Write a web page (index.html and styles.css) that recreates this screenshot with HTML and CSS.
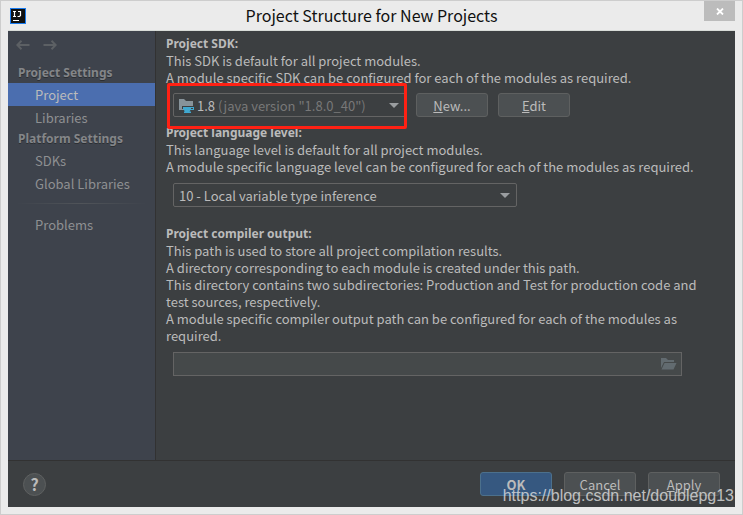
FILE: index.html
```html
<!DOCTYPE html>
<html lang="en">
<head>
    <meta charset="UTF-8">
    <meta name="viewport" content="width=device-width, initial-scale=1.0">
    <title>Project Structure for New Projects</title>
    <link rel="stylesheet" href="styles.css">
</head>
<body>
    <div class="window">
        <header class="titlebar">
            <svg class="logo" width="16" height="16" viewBox="0 0 16 16">
                <rect width="16" height="16" fill="#1a7cf0"/>
                <rect x="1" y="1" width="14" height="14" fill="#111"/>
                <path d="M3 3.500h3M4.500 3.500v5M3 8.500h3M8 3.500h2.500v4l-1 1H7.500" fill="none" stroke="#fff" stroke-width="1.200"/>
                <rect x="3" y="12" width="6" height="1" fill="#fff"/>
            </svg>
            <h1>Project Structure for New Projects</h1>
            <button class="close" aria-label="Close">
                <svg width="8" height="7" viewBox="0 0 8 7">
                    <path d="M1 0.500l6 6M7 0.500l-6 6" stroke="#fff" stroke-width="1.800"/>
                </svg>
            </button>
        </header>

        <div class="dialog">
            <div class="panes">
                <nav class="sidebar">
                    <div class="history">
                        <button aria-label="Back">
                            <svg width="14" height="10" viewBox="0 0 14 10"><path d="M13.500 5H1.500M5.500 0.800L1.300 5l4.200 4.200"/></svg>
                        </button>
                        <button aria-label="Forward">
                            <svg width="14" height="10" viewBox="0 0 14 10"><path d="M0.500 5h12M8.500 0.800L12.700 5 8.500 9.200"/></svg>
                        </button>
                    </div>
                    <h2>Project Settings</h2>
                    <a href="#project" class="active">Project</a>
                    <a href="#libraries">Libraries</a>
                    <h2>Platform Settings</h2>
                    <a href="#sdks">SDKs</a>
                    <a href="#global">Global Libraries</a>
                    <hr>
                    <a href="#problems">Problems</a>
                </nav>

                <main class="content">
                    <section class="sdk">
                        <label for="sdk">Project SDK:</label>
                        <p>This SDK is default for all project modules.</p>
                        <p>A module specific SDK can be configured for each of the modules as required.</p>
                        <div class="field">
                            <div class="combo sdk-combo">
                                <select id="sdk">
                                    <option>1.8</option>
                                </select>
                                <div class="sdk-info">
                                    <svg width="16" height="15" viewBox="0 0 16 15">
                                        <path d="M0 1h5l2 2h7v9H0z" fill="#87939a"/>
                                        <path d="M3 8h12v3H3z" fill="#3c3f41"/>
                                        <path d="M4 9h11v3h-3.500l-1 1.500H12V15H5v-1.500h1L4 11z" fill="#40a8d0"/>
                                        <rect x="12" y="10" width="2" height="1" fill="#3c3f41"/>
                                    </svg>
                                    <span>(java version "1.8.0_40")</span>
                                </div>
                                <div class="highlight"></div>
                            </div>
                            <button class="btn"><u>N</u>ew...</button>
                            <button class="btn"><u>E</u>dit</button>
                        </div>
                    </section>

                    <section class="level">
                        <label for="level">Project language level:</label>
                        <p>This language level is default for all project modules.</p>
                        <p>A module specific language level can be configured for each of the modules as required.</p>
                        <div class="field">
                            <div class="combo level-combo">
                                <select id="level">
                                    <option>10 - Local variable type inference</option>
                                </select>
                            </div>
                        </div>
                    </section>

                    <section>
                        <label for="output">Project compiler output:</label>
                        <p>This path is used to store all project compilation results.</p>
                        <p>A directory corresponding to each module is created under this path.</p>
                        <p>This directory contains two subdirectories: Production and Test for production code and test sources, respectively.</p>
                        <p>A module specific compiler output path can be configured for each of the modules as required.</p>
                        <div class="path">
                            <input type="text" id="output">
                            <button aria-label="Browse">
                                <svg width="16" height="12" viewBox="0 0 16 12">
                                    <path d="M0 0h5l2 2h6v2H3L0 10z" fill="#626b70"/>
                                    <path d="M3.500 5H15.500l-3 6.500H0.500z" fill="#626b70"/>
                                </svg>
                            </button>
                        </div>
                    </section>
                </main>
            </div>

            <footer class="footer">
                <button class="help" aria-label="Help">?</button>
                <button class="btn primary">OK</button>
                <button class="btn">Cancel</button>
                <button class="btn"><u>A</u>pply</button>
            </footer>
        </div>
        <div class="watermark">https://blog.csdn.net/doublepg13</div>
    </div>
</body>
</html>
```

FILE: styles.css
```css
* {
    box-sizing: border-box;
}
body {
    margin: 0;
    font-family: "Noto Sans CJK SC", "Noto Sans", sans-serif;
    font-size: 13px;
    line-height: 17px;
    color: #bbbbbb;
}
button, select, input {
    font: inherit;
    color: inherit;
    margin: 0;
    padding: 0;
}
.window {
    position: relative;
    display: flex;
    flex-direction: column;
    min-height: 100vh;
    padding: 0 7px 7px;
    background: #ebebeb;
    border: 1px solid #cdcdcd;
}
.titlebar {
    display: grid;
    grid-template-columns: 32px 1fr 32px;
    align-items: center;
    height: 29px;
}
.logo {
    margin-left: 2px;
}
.titlebar h1 {
    margin: 0;
    font-size: 16px;
    font-weight: normal;
    text-align: center;
    color: #111;
}
.close {
    align-self: start;
    justify-self: end;
    display: flex;
    align-items: center;
    justify-content: center;
    width: 31px;
    height: 20px;
    background: #bcbcbc;
    border: none;
}
.dialog {
    flex: 1;
    display: flex;
    flex-direction: column;
    background: #3c3f41;
    border-top: 1px solid #d8dcd8;
}
.panes {
    flex: 1;
    display: flex;
    border-bottom: 1px solid #323232;
}

/* sidebar */
.sidebar {
    width: 148px;
    flex-shrink: 0;
    background: #3e434c;
    border-right: 1px solid #323232;
}
.history {
    display: flex;
    gap: 13px;
    padding: 9px 8px 0;
    height: 32px;
}
.history button {
    height: 10px;
    display: flex;
    background: none;
    border: none;
}
.history path {
    fill: none;
    stroke: #5c6064;
    stroke-width: 2;
}
.sidebar h2 {
    margin: 0;
    padding-left: 10px;
    font-family: "Noto Sans", sans-serif;
    font-size: 12px;
    line-height: 20px;
    color: #848689;
    text-shadow: 0 1px #2c2f33;
}
.sidebar a {
    display: block;
    padding-left: 27px;
    line-height: 23px;
    color: #8e9092;
    text-decoration: none;
}
.sidebar a.active {
    background: #4b6eaf;
    color: #bbbbbb;
}
.sidebar hr {
    height: 1px;
    margin: 8px 8px 9px;
    border: none;
    background: linear-gradient(to right, #3e434c, #505459, #3e434c);
}

/* settings */
.content {
    flex: 1;
    padding: 4px 10px;
}
.content label {
    display: block;
    font-family: "Noto Sans", sans-serif;
    font-size: 12px;
    font-weight: bold;
}
.content p {
    max-width: 540px;
    margin: 0;
}
.sdk {
    margin-bottom: 7px;
}
.level {
    margin-bottom: 18px;
}
.field {
    display: flex;
    gap: 10px;
    margin: 7px 7px 0;
}
.level .field {
    margin-top: 8px;
}
.combo {
    position: relative;
    display: grid;
}
.combo::after {
    content: "";
    grid-area: 1 / 1;
    place-self: center end;
    margin-right: 7px;
    border: 5px solid transparent;
    border-top-color: #9a9da0;
    border-bottom: none;
    pointer-events: none;
}
.combo select {
    grid-area: 1 / 1;
    height: 24px;
    padding: 0 20px 0 5px;
    appearance: none;
    background: #3c3f41;
    border: 1px solid #646464;
    border-radius: 2px;
}
.sdk-combo {
    width: 233px;
}
.sdk-combo select {
    padding-left: 23px;
}
.sdk-info {
    grid-area: 1 / 1;
    display: flex;
    align-items: center;
    gap: 23px;
    padding-left: 6px;
    color: #787878;
    pointer-events: none;
}
.highlight {
    position: absolute;
    inset: -10px -1px -12px -6px;
    border: 3px solid #ff2114;
    border-radius: 2px;
    pointer-events: none;
}
.level-combo {
    width: 344px;
}
.btn {
    width: 72px;
    height: 24px;
    background: #4c5052;
    border: 1px solid #5e6060;
    border-radius: 3px;
}
.btn.primary {
    background: #365880;
    border-color: #4c708c;
    font-weight: bold;
}
.path {
    display: flex;
    align-items: center;
    max-width: 509px;
    height: 24px;
    margin: 8px 7px 0;
    padding-right: 4px;
    background: #45494a;
    border: 1px solid #646464;
}
.path input {
    flex: 1;
    padding: 0 5px;
    background: none;
    border: none;
}
.path button {
    display: flex;
    background: none;
    border: none;
}

/* bottom buttons */
.footer {
    display: flex;
    align-items: center;
    gap: 12px;
    height: 46px;
    padding: 0 15px;
}
.help {
    width: 23px;
    height: 23px;
    margin-right: auto;
    background: #4c5052;
    border: 1px solid #5e6060;
    border-radius: 50%;
    font-size: 16px;
    font-weight: bold;
}
.watermark {
    position: absolute;
    right: 8px;
    bottom: 9px;
    font-family: "Liberation Sans", Arial, sans-serif;
    font-size: 16px;
    line-height: 18px;
    color: rgba(225, 225, 225, 0.8);
    pointer-events: none;
}
```
